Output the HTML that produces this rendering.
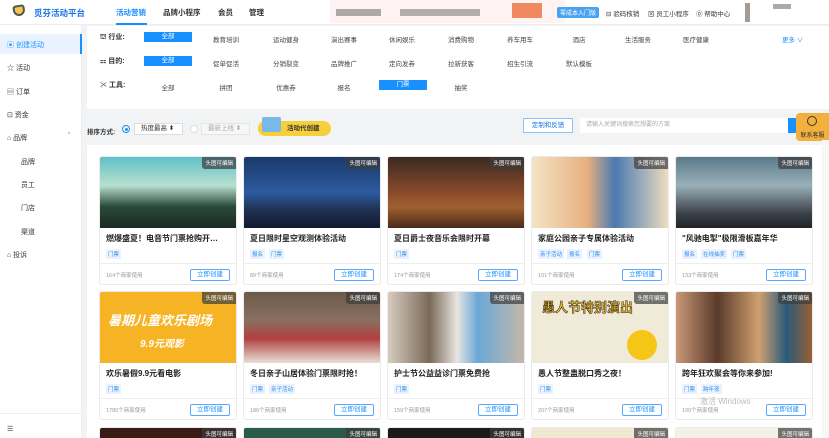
<!DOCTYPE html><html><head><meta charset="utf-8"><style>
*{box-sizing:border-box;margin:0;padding:0}
html,body{width:829px;height:438px;overflow:hidden}
body{background:#f2f3f5;font-family:"Liberation Sans","Noto Sans CJK SC",sans-serif;position:relative;color:#333}
.a{position:absolute}
.hdr{left:0;top:0;width:829px;height:25px;background:#fff;border-bottom:1px solid #eee}
.side{left:0;top:25px;width:82px;height:413px;background:#fff;border-right:1px solid #eee}
.si{position:absolute;left:7px;font-size:7px;color:#333}
.filt{left:87px;top:26px;width:742px;height:83px;background:#fff}
.ft{font-size:6.5px;color:#444;position:absolute;text-align:center;width:48px}
.sel{background:#1890ff;color:#fff;height:10px;line-height:10px}
.panel{left:87px;top:145px;width:735px;height:293px;background:#fff}
.card{position:absolute;width:138px;height:129px;background:#fff;border:1px solid #eaeaea;border-radius:3px;overflow:hidden}
.img{position:absolute;left:0;top:0;width:138px;height:71px}
.bd{position:absolute;right:0;top:0;background:rgba(60,60,60,.7);color:#fff;font-size:5.5px;padding:2px 3px;border-radius:0 0 0 3px}
.tt{position:absolute;left:6px;top:76px;font-size:8px;font-weight:bold;color:#222;white-space:nowrap}
.tg{position:absolute;top:92px;font-size:5.5px;color:#3a8ee6;background:#e8f3ff;padding:1px 2px}
.ln{position:absolute;left:0;top:106px;width:138px;border-top:1px solid #eee}
.us{position:absolute;left:6px;top:114px;font-size:5.5px;color:#999}
.bt{position:absolute;right:6px;top:112px;width:40px;height:12px;border:1px solid #5aa7ff;color:#1890ff;font-size:6.5px;text-align:center;line-height:10px;border-radius:2px}
.r3{height:11px;border-bottom:none;border-radius:3px 3px 0 0}
</style></head><body>
<div class="a hdr">
 <div class="a" style="left:13px;top:5px;width:12px;height:11px;background:#f2c94c;border:2px solid #555;border-radius:3px 3px 6px 6px;transform:rotate(-10deg)"></div>
 <div class="a" style="left:34px;top:7px;font-size:8.5px;font-weight:bold;color:#1a73e8">觅芬活动平台</div>
 <div class="a" style="left:116px;top:7px;font-size:7.5px;font-weight:bold;color:#1890ff">活动营销</div>
 <div class="a" style="left:116px;top:23px;width:31px;height:2px;background:#1890ff"></div>
 <div class="a" style="left:163px;top:7px;font-size:7.5px;font-weight:bold">品牌小程序</div>
 <div class="a" style="left:218px;top:7px;font-size:7.5px;font-weight:bold">会员</div>
 <div class="a" style="left:249px;top:7px;font-size:7.5px;font-weight:bold">管理</div>
 <div class="a" style="left:330px;top:0;width:235px;height:23px;background:#fff2f2"></div>
 <div class="a" style="left:336px;top:9px;width:45px;height:7px;background:#777;opacity:.6"></div>
 <div class="a" style="left:400px;top:9px;width:80px;height:7px;background:#666;opacity:.5"></div>
 <div class="a" style="left:512px;top:3px;width:30px;height:15px;background:#f08860"></div>
 <div class="a" style="left:557px;top:7px;padding:1px 3px;font-size:6px;background:#4aa3f0;color:#fff;border-radius:2px">零成本入门版</div>
 <div class="a" style="left:606px;top:8px;font-size:6.5px">⊟ 验码核销</div>
 <div class="a" style="left:648px;top:8px;font-size:6.5px">⊠ 员工小程序</div>
 <div class="a" style="left:696px;top:8px;font-size:6.5px">⓪ 帮助中心</div>
 <div class="a" style="left:745px;top:3px;width:5px;height:19px;background:#6b5a50;opacity:.6"></div>
 <div class="a" style="left:773px;top:4px;width:18px;height:5px;background:#555;opacity:.5"></div>
</div>
<div class="a side">
 <div class="a" style="left:0;top:9px;width:82px;height:20px;background:#e8f3ff;border-right:2px solid #1890ff"></div>
 <div class="si" style="top:15px;color:#1890ff">▣ 创建活动</div>
 <div class="si" style="top:38px">☆ 活动</div>
 <div class="si" style="top:62px">▤ 订单</div>
 <div class="si" style="top:85px">⊡ 资金</div>
 <div class="si" style="top:108px">⌂ 品牌</div><div class="si" style="left:68px;top:108px">ˆ</div>
 <div class="si" style="left:21px;top:132px">品牌</div>
 <div class="si" style="left:21px;top:155px">员工</div>
 <div class="si" style="left:21px;top:178px">门店</div>
 <div class="si" style="left:21px;top:202px">渠道</div>
 <div class="si" style="top:225px">⌂ 投诉</div>
 <div class="a" style="left:0;top:388px;width:82px;border-top:1px solid #eee"></div>
 <div class="si" style="top:400px">☰</div>
</div>
<div class="a filt">
 <div class="a" style="left:13px;top:6px;font-size:7px;font-weight:bold">⛫ 行业:</div>
 <div class="a" style="left:13px;top:30px;font-size:7px;font-weight:bold">⚏ 目的:</div>
 <div class="a" style="left:13px;top:54px;font-size:7px;font-weight:bold">✂ 工具:</div>
 <div class="ft sel" style="left:57px;top:6px">全部</div><div class="ft" style="left:115px;top:8px">教育培训</div><div class="ft" style="left:175px;top:8px">运动健身</div><div class="ft" style="left:233px;top:8px">演出赛事</div><div class="ft" style="left:291px;top:8px">休闲娱乐</div><div class="ft" style="left:350px;top:8px">消费购物</div><div class="ft" style="left:409px;top:8px">养车用车</div><div class="ft" style="left:468px;top:8px">酒店</div><div class="ft" style="left:527px;top:8px">生活服务</div><div class="ft" style="left:585px;top:8px">医疗健康</div><div class="a" style="left:695px;top:8px;font-size:6.5px;color:#1890ff">更多 ∨</div>
 <div class="ft sel" style="left:57px;top:30px">全部</div><div class="ft" style="left:115px;top:32px">促单促活</div><div class="ft" style="left:175px;top:32px">分销裂变</div><div class="ft" style="left:233px;top:32px">品牌推广</div><div class="ft" style="left:291px;top:32px">定向发券</div><div class="ft" style="left:350px;top:32px">拉新获客</div><div class="ft" style="left:409px;top:32px">招生引流</div><div class="ft" style="left:468px;top:32px">默认模板</div>
 <div class="ft" style="left:57px;top:56px">全部</div><div class="ft" style="left:115px;top:56px">拼团</div><div class="ft" style="left:175px;top:56px">优惠券</div><div class="ft" style="left:233px;top:56px">报名</div><div class="ft sel" style="left:292px;top:54px">门票</div><div class="ft" style="left:350px;top:56px">抽奖</div>
</div>
<div class="a" style="left:87px;top:126px;font-size:6.5px;font-weight:bold">排序方式:</div>
<div class="a" style="left:122px;top:125px;width:8px;height:8px;border:1px solid #1890ff;border-radius:50%"><div style="margin:1.5px;width:3px;height:3px;background:#1890ff;border-radius:50%"></div></div>
<div class="a" style="left:134px;top:123px;width:49px;height:12px;background:#fff;border:1px solid #ddd;font-size:6.5px;line-height:10px;padding-left:6px">热度最高 ⬍</div>
<div class="a" style="left:190px;top:125px;width:8px;height:8px;border:1px solid #ddd;border-radius:50%;background:#fff"></div>
<div class="a" style="left:201px;top:123px;width:49px;height:12px;background:#f7f7f7;border:1px solid #e5e5e5;font-size:6.5px;line-height:10px;padding-left:6px;color:#aaa">最新上线 ⬍</div>
<div class="a" style="left:258px;top:121px;width:73px;height:15px;background:#f7cf3a;border-radius:8px;font-size:6.5px;font-weight:bold;line-height:15px;padding-left:29px">活动代创建</div>
<div class="a" style="left:262px;top:117px;width:19px;height:15px;background:#7ab8e8;border-radius:2px"></div>
<div class="a" style="left:523px;top:118px;width:50px;height:15px;border:1px solid #8cc1f5;background:#fff;font-size:6.5px;color:#1a73e8;text-align:center;line-height:13px">定制和反馈</div>
<div class="a" style="left:580px;top:118px;width:208px;height:15px;background:#fff;font-size:6px;color:#aaa;line-height:15px;padding-left:6px">请输入关键词搜索您想要的方案</div>
<div class="a" style="left:788px;top:118px;width:8px;height:15px;background:#1890ff"></div>
<div class="a" style="left:796px;top:113px;width:33px;height:28px;background:#f3b03c;border-radius:4px 0 0 4px;font-size:6px;color:#333;text-align:center;padding-top:17px">联系客服</div>
<div class="a" style="left:807px;top:116px;width:10px;height:10px;border:1.5px solid #333;border-radius:50%"></div>
<div class="a panel"></div>
<div class="a" style="left:822px;top:140px;width:7px;height:298px;background:#f7f7f7"></div>

<div class="card" style="left:99px;top:156px"><div class="img" style="background:linear-gradient(#5fc0c8,#b8e0d0 40%,#2a4a3a 70%,#1a2a22)"></div><div class="bd">头图可编辑</div><div class="tt">燃爆盛夏！电音节门票抢购开…</div><div class="tg" style="left:6px">门票</div><div class="ln"></div><div class="us">164个商家使用</div><div class="bt">立即创建</div></div>
<div class="card" style="left:243px;top:156px"><div class="img" style="background:linear-gradient(#1a3a6a,#2d5aa0 50%,#203050 75%,#101a30)"></div><div class="bd">头图可编辑</div><div class="tt">夏日限时星空观测体验活动</div><div class="tg" style="left:6px">报名</div><div class="tg" style="left:25px">门票</div><div class="ln"></div><div class="us">89个商家使用</div><div class="bt">立即创建</div></div>
<div class="card" style="left:387px;top:156px"><div class="img" style="background:linear-gradient(#3a2a22,#8a4a2a 50%,#a06030 70%,#4a2a1a)"></div><div class="bd">头图可编辑</div><div class="tt">夏日爵士夜音乐会限时开幕</div><div class="tg" style="left:6px">门票</div><div class="ln"></div><div class="us">174个商家使用</div><div class="bt">立即创建</div></div>
<div class="card" style="left:531px;top:156px"><div class="img" style="background:linear-gradient(90deg,#f3e4c4,#e8b080 40%,#4a7ab0 60%,#f3e0c0)"></div><div class="bd">头图可编辑</div><div class="tt">家庭公园亲子专属体验活动</div><div class="tg" style="left:6px">亲子活动</div><div class="tg" style="left:35px">报名</div><div class="tg" style="left:55px">门票</div><div class="ln"></div><div class="us">101个商家使用</div><div class="bt">立即创建</div></div>
<div class="card" style="left:675px;top:156px"><div class="img" style="background:linear-gradient(#5a7a8a,#9ab0b8 40%,#3a4048 80%,#202428)"></div><div class="bd">头图可编辑</div><div class="tt">"风驰电掣"极限滑板嘉年华</div><div class="tg" style="left:6px">报名</div><div class="tg" style="left:25px">在线抽奖</div><div class="tg" style="left:55px">门票</div><div class="ln"></div><div class="us">133个商家使用</div><div class="bt">立即创建</div></div>

<div class="card" style="left:99px;top:291px"><div class="img" style="background:#f6b324"><div style="position:absolute;left:8px;top:18px;font-size:13px;font-weight:bold;color:#fff;font-style:italic">暑期儿童欢乐剧场</div><div style="position:absolute;left:40px;top:43px;font-size:10px;font-weight:bold;color:#fff;font-style:italic">9.9元观影</div></div><div class="bd">头图可编辑</div><div class="tt">欢乐暑假9.9元看电影</div><div class="tg" style="left:6px">门票</div><div class="ln"></div><div class="us">1780个商家使用</div><div class="bt">立即创建</div></div>
<div class="card" style="left:243px;top:291px"><div class="img" style="background:linear-gradient(#6a5a4a,#8a7060 40%,#b04040 65%,#e8e0d8)"></div><div class="bd">头图可编辑</div><div class="tt">冬日亲子山居体验门票限时抢！</div><div class="tg" style="left:6px">门票</div><div class="tg" style="left:25px">亲子活动</div><div class="ln"></div><div class="us">186个商家使用</div><div class="bt">立即创建</div></div>
<div class="card" style="left:387px;top:291px"><div class="img" style="background:linear-gradient(90deg,#d8ccc0,#7a6a58 30%,#e8e4e0 50%,#6aa8d8 65%,#c8b8a8)"></div><div class="bd">头图可编辑</div><div class="tt">护士节公益益诊门票免费抢</div><div class="tg" style="left:6px">门票</div><div class="ln"></div><div class="us">159个商家使用</div><div class="bt">立即创建</div></div>
<div class="card" style="left:531px;top:291px"><div class="img" style="background:#f0ead8"><div style="position:absolute;left:10px;top:5px;font-size:13px;font-weight:bold;color:#f0b820;-webkit-text-stroke:.5px #222">愚人节特别演出</div><div style="position:absolute;left:95px;top:38px;width:30px;height:30px;border-radius:50%;background:#f5c518"></div></div><div class="bd">头图可编辑</div><div class="tt">愚人节整蛊脱口秀之夜！</div><div class="tg" style="left:6px">门票</div><div class="ln"></div><div class="us">207个商家使用</div><div class="bt">立即创建</div></div>
<div class="card" style="left:675px;top:291px"><div class="img" style="background:linear-gradient(90deg,#c89878,#5a3a2a 30%,#d0a070 60%,#2a5a7a 80%,#a06030)"></div><div class="bd">头图可编辑</div><div class="tt">跨年狂欢聚会等你来参加!</div><div class="tg" style="left:6px">门票</div><div class="tg" style="left:25px">跨年夜</div><div class="ln"></div><div class="us">100个商家使用</div><div class="bt">立即创建</div></div>
<div class="a" style="left:700px;top:396px;font-size:8px;color:rgba(120,120,120,.5)">激活 Windows</div>

<div class="card r3" style="left:99px;top:427px;background:#3a1a14"><div class="bd">头图可编辑</div></div>
<div class="card r3" style="left:243px;top:427px;background:#2a5a48"><div class="bd">头图可编辑</div></div>
<div class="card r3" style="left:387px;top:427px;background:#1a1a1a"><div class="bd">头图可编辑</div></div>
<div class="card r3" style="left:531px;top:427px;background:#f0e8d0"><div class="bd">头图可编辑</div></div>
<div class="card r3" style="left:675px;top:427px;background:#f5f0e8"><div class="bd">头图可编辑</div></div>
</body></html>
